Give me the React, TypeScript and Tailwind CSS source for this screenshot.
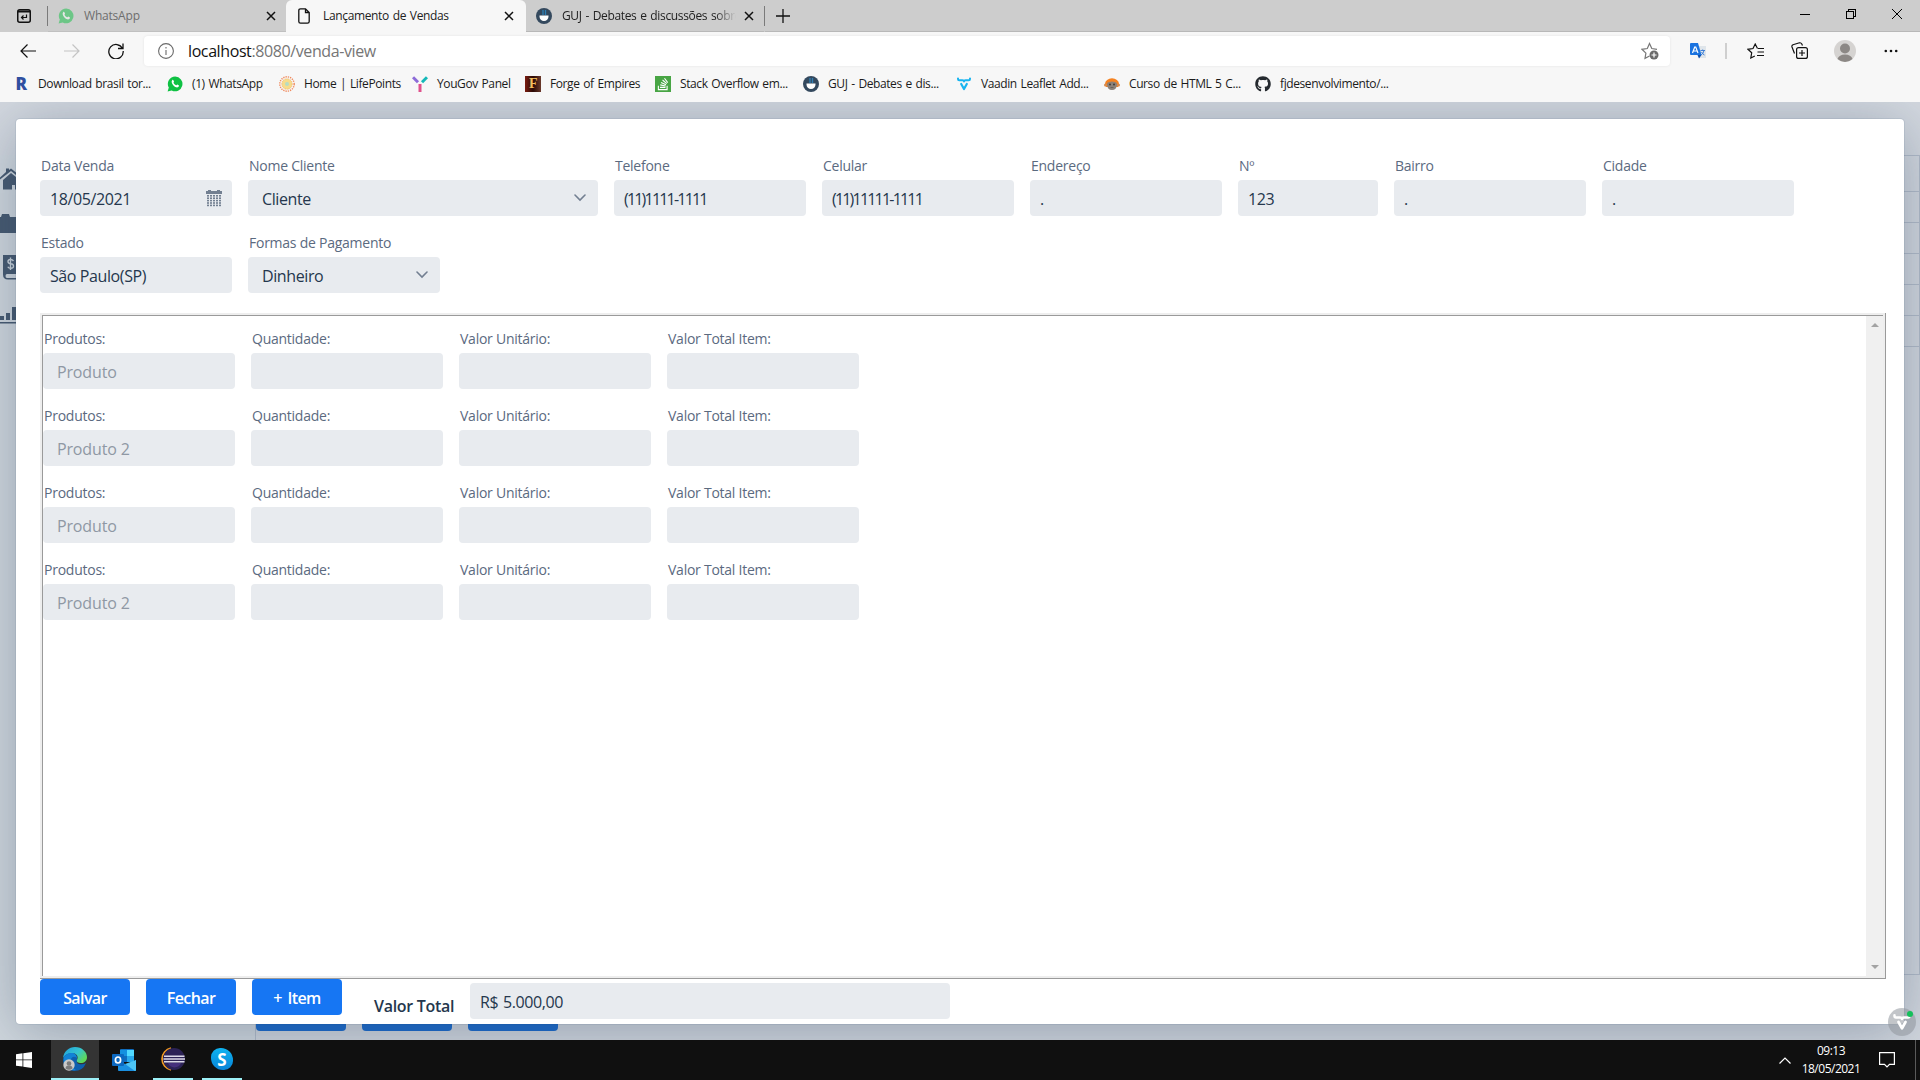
import React from 'react';
import clsx from 'clsx';
import { FaGithub, FaStackOverflow } from 'react-icons/fa';

/* ---------- Icons ---------- */

const WhatsAppIcon = ({ className }: { className?: string }) => (
  <svg viewBox="0 0 16 16" className={clsx('h-4 w-4', className)}>
    <path d="M8.2.5a7.4 7.4 0 0 0-6.4 11.1L.6 15.6l4.1-1.1A7.4 7.4 0 1 0 8.2.5z" fill="#0fc143" />
    <path d="M5.3 4.1c.5-.5 1-.2 1.2.3l.5 1.2c.1.4-.6.9-.5 1.2.5 1.1 1.4 2 2.6 2.5.4.1.8-.9 1.2-.8l1.4.7c.6.3 0 1.6-.5 1.9-1.2.7-3 .1-4.5-1.3C4.900 8.100 3.900 5.500 5.300 4.100z" fill="#fff" />
  </svg>
);

const GujIcon = () => (
  <svg viewBox="0 0 16 16" className="h-4 w-4">
    <circle cx="8" cy="8" r="8" fill="#34495e" />
    <path d="M7 2v5M9.500 2v5" stroke="#2f80b5" strokeWidth="1.300" />
    <path d="M3.500 7.500h9v1a4.500 4.500 0 0 1-9 0z" fill="#fff" />
  </svg>
);

const LifePointsIcon = () => (
  <svg viewBox="0 0 16 16" className="h-4 w-4">
    <circle cx="8" cy="8" r="7.200" fill="none" stroke="#f08a5d" strokeWidth="1.400" strokeDasharray="1.300 1" />
    <circle cx="8" cy="8" r="5.200" fill="#f6dc8b" />
    <circle cx="8" cy="8" r="5.200" fill="none" stroke="#f5b971" strokeWidth="1" strokeDasharray="1 .8" />
    <circle cx="8" cy="8" r="2" fill="#b5dcc5" />
  </svg>
);

const YouGovIcon = () => (
  <svg viewBox="0 0 16 16" className="h-4 w-4" strokeWidth="3">
    <path d="M1 1.200l5 5" stroke="#8c6bd8" />
    <path d="M15 1.200l-5 5" stroke="#14b8b8" />
    <path d="M8 8v8" stroke="#e0518c" />
  </svg>
);

const ForgeIcon = () => (
  <div className="flex h-4 w-4 items-center justify-center bg-linear-to-r from-[#7c1c10] via-[#2a0a06] to-[#6b3a2c] font-['Liberation_Serif',serif] text-[14px] leading-none font-bold text-[#f3bf5f]">
    F
  </div>
);

const StackIcon = () => (
  <div className="flex h-4 w-4 items-center justify-center bg-[#48a544]">
    <FaStackOverflow size={14} className="text-white" />
  </div>
);

const VaadinIcon = ({ className }: { className?: string }) => (
  <svg viewBox="0 0 16 16" className={className} fill="none" strokeWidth="2" strokeLinecap="round" strokeLinejoin="round">
    <path d="M2 2.500v.6q0 1.200 1.200 1.200h3.300Q8 4.300 8 5.500 8 4.300 9.500 4.300h3.300q1.200 0 1.200-1.200v-.6" stroke="currentColor" />
    <path d="M5.200 8L8 13l2.800-5" stroke="currentColor" strokeWidth="2.200" />
  </svg>
);

const MonkeyIcon = () => (
  <svg viewBox="0 0 16 16" className="h-4 w-4">
    <path d="M1 8a7 5.800 0 0 1 14 0l-1 3H2z" fill="#f58220" />
    <circle cx="1.600" cy="9" r="1.600" fill="#d98a4a" />
    <circle cx="14.400" cy="9" r="1.600" fill="#d98a4a" />
    <path d="M3 8.500Q3 6 5.500 6 8 5 10.500 6 13 6 13 8.500 12.500 14 8 14 3.500 14 3 8.500z" fill="#8b8178" />
    <circle cx="6" cy="8.500" r=".9" fill="#3a3430" />
    <circle cx="10" cy="8.500" r=".9" fill="#3a3430" />
    <path d="M6.500 11.500h3" stroke="#6a625b" />
  </svg>
);

const CloseIcon = () => (
  <svg viewBox="0 0 10 10" className="h-2.5 w-2.5" stroke="#111" strokeWidth="1.500">
    <path d="M1 1l8 8M9 1L1 9" />
  </svg>
);

const ChevronDown = () => (
  <svg viewBox="0 0 12 8" className="mr-0.5 h-2 w-3" fill="none" stroke="#727f91" strokeWidth="1.600" strokeLinecap="round">
    <path d="M1 1l5 5 5-5" />
  </svg>
);

const CalendarIcon = () => (
  <svg viewBox="0 0 16 17" className="h-[17px] w-4" fill="#727f91">
    <path d="M0 1h2V0h3v1h6V0h3v1h2v3H0z" />
    {[0, 1, 2, 3, 4].map((row) =>
      [0, 1, 2, 3, 4].map((col) => (
        <rect key={`${row}-${col}`} x={1 + col * 3} y={5 + row * 2.4} width="2" height="1.600" />
      ))
    )}
  </svg>
);

/* ---------- Browser chrome ---------- */

interface Bookmark {
  label: string;
  icon: React.ReactNode;
  width: string;
}

const bookmarks: Bookmark[] = [
  { label: 'Download brasil tor...', width: 'w-[154px]', icon: <span className="flex h-4 w-4 items-center justify-center text-[17px] font-extrabold text-[#2f4fa0]">R</span> },
  { label: '(1) WhatsApp', width: 'w-[112px]', icon: <WhatsAppIcon /> },
  { label: 'Home | LifePoints', width: 'w-[133px]', icon: <LifePointsIcon /> },
  { label: 'YouGov Panel', width: 'w-[113px]', icon: <YouGovIcon /> },
  { label: 'Forge of Empires', width: 'w-[130px]', icon: <ForgeIcon /> },
  { label: 'Stack Overflow em...', width: 'w-[148px]', icon: <StackIcon /> },
  { label: 'GUJ - Debates e dis...', width: 'w-[153px]', icon: <GujIcon /> },
  { label: 'Vaadin Leaflet Add...', width: 'w-[148px]', icon: <VaadinIcon className="h-4 w-4 text-[#17b4f0]" /> },
  { label: 'Curso de HTML 5 C...', width: 'w-[151px]', icon: <MonkeyIcon /> },
  { label: 'fjdesenvolvimento/...', width: 'w-[140px]', icon: <FaGithub size={16} className="text-[#24292e]" /> },
];

const TabBar = () => (
  <div className="flex h-8 bg-[#cdcdcd] text-[12px] tracking-[-0.35px] [word-spacing:1px]">
    <div className="flex w-[47px] items-center justify-center">
      <svg viewBox="0 0 14 14" className="h-3.5 w-3.5">
        <rect x=".75" y=".75" width="12.500" height="12.500" rx="2" fill="none" stroke="#111" strokeWidth="1.500" />
        <path d="M1 2.500h12" stroke="#111" strokeWidth="2" />
        <path d="M9.500 5.500v3h-5M6.500 6.500l-2 2 2 2" fill="none" stroke="#111" strokeWidth="1.200" />
      </svg>
    </div>
    <div className="my-1.5 w-px bg-[#7a7a7a]" />
    <div className="flex w-[238px] items-center border-b border-[#c0c0c0] pr-2.5 pl-2.5">
      <WhatsAppIcon className="opacity-50" />
      <span className="ml-2.5 flex-1 tracking-[-0.2px] text-[#6d6d6d]">WhatsApp</span>
      <CloseIcon />
    </div>
    <div className="flex w-60 items-center rounded-t-md bg-[#f7f7f7] pr-3 pl-3">
      <svg viewBox="0 0 12 16" className="h-4 w-3" fill="none" stroke="#111" strokeWidth="1.300">
        <path d="M7.500.8H2.500Q.8.8.8 2.500v11q0 1.700 1.700 1.700h7q1.700 0 1.700-1.700v-9zV4.500h3.700" />
      </svg>
      <span className="ml-[13px] flex-1 text-[#222]">Lançamento de Vendas</span>
      <CloseIcon />
    </div>
    <div className="flex w-[238px] items-center border-b border-[#b8b8b8] pr-2.5 pl-2.5">
      <GujIcon />
      <span className="ml-2.5 w-[174px] overflow-hidden mask-r-from-88% whitespace-nowrap text-[#222]">
        GUJ - Debates e discussões sobre
      </span>
      <span className="ml-auto"><CloseIcon /></span>
    </div>
    <div className="my-1.5 w-px bg-[#7a7a7a]" />
    <div className="flex flex-1 items-center border-b border-[#b8b8b8] pl-[11px]">
      <svg viewBox="0 0 14 14" className="h-3.5 w-3.5" stroke="#111" strokeWidth="1.300">
        <path d="M7 0v14M0 7h14" />
      </svg>
      <div className="ml-auto flex w-[120px] items-center gap-9">
        <svg viewBox="0 0 10 10" className="h-2.5 w-2.5 -translate-y-0.5" stroke="#000" shapeRendering="crispEdges">
          <path d="M0 5.500h10" />
        </svg>
        <svg viewBox="0 0 10 10" className="h-2.5 w-2.5 -translate-y-0.5" fill="none" stroke="#000" shapeRendering="crispEdges">
          <path d="M.5 2.500h7v7h-7zM2.500 2.500v-2h7v7h-2" />
        </svg>
        <svg viewBox="0 0 10 10" className="h-2.5 w-2.5 -translate-y-0.5" stroke="#000">
          <path d="M0 0l10 10M10 0L0 10" />
        </svg>
      </div>
    </div>
  </div>
);

const AddressBar = () => (
  <div className="flex h-[38px] items-center pb-px">
    <div className="flex w-36 items-center pl-5">
      <svg viewBox="0 0 16 14" className="h-3.5 w-4" fill="none" stroke="#111" strokeWidth="1.200">
        <path d="M16 7H1M7.500.5L1 7l6.500 6.500" />
      </svg>
      <svg viewBox="0 0 16 14" className="ml-7 h-3.5 w-4" fill="none" stroke="#c4c4c4" strokeWidth="1.200">
        <path d="M0 7h15M8.500.5L15 7l-6.500 6.500" />
      </svg>
      <svg viewBox="0 0 16 16" className="ml-7 h-4 w-4" fill="none" stroke="#111" strokeWidth="1.300">
        <path d="M14.500 5.500A7.200 7.200 0 1 0 15.200 8M15 .5v5h-5" />
      </svg>
    </div>
    <div className="flex h-[30px] w-[1526px] items-center rounded bg-white pr-[11px] pl-3.5 shadow-[0_0_3px_rgba(0,0,0,0.08)]">
      <svg viewBox="0 0 16 16" className="h-4 w-4" fill="none" stroke="#6a6a6a" strokeWidth="1.100">
        <circle cx="8" cy="8" r="7.400" />
        <path d="M8 7v5M8 4v1.500" />
      </svg>
      <span className="ml-3.5 flex-1 text-[16px] tracking-[-0.4px] text-[#767676]">
        <span className="text-[#111]">localhost</span>:8080/venda-view
      </span>
      <svg viewBox="0 0 18 18" className="h-[18px] w-[18px]" fill="none" stroke="#777" strokeWidth="1.200">
        <path d="M8.500 14L4 16.300l.9-5.200L1 7.300l5.300-.8L8.500 1.500l2.300 5 5.200.8" />
        <circle cx="13" cy="13" r="4.500" fill="#6b6b6b" stroke="none" />
        <path d="M13 10.500v5M10.500 13h5" stroke="#fff" />
      </svg>
    </div>
    <div className="flex flex-1 items-center pl-5">
      <svg viewBox="0 0 16 16" className="h-4 w-4">
        <path d="M7 3h9v12H9z" fill="#dfe5ea" />
        <path d="M1 0h7l3.500 12H1q-1 0-1-1V1q0-1 1-1z" fill="#1a73e0" />
        <path d="M7.500 12h4L9 15.500z" fill="#0b4fae" />
        <path d="M2.500 10L4.700 4h1L8 10M3.400 8h3.800" fill="none" stroke="#fff" strokeWidth="1.200" />
        <path d="M10.500 7.500h4.500M12.700 6.500v1M14 7.500q-.5 3-3 4.500M11.500 9q1.500 2.500 3 3" fill="none" stroke="#3f80d8" />
      </svg>
      <div className="ml-[19px] h-4 w-0.5 bg-[#cfcfcf]" />
      <svg viewBox="0 0 18 16" className="ml-5 h-4 w-[18px]" fill="none" stroke="#111" strokeWidth="1.200">
        <path d="M10.500 5.500L8.200 1 6 5.500l-5 .8 3.700 3.500-.9 5.200 4-2M11 5.500h6M10.500 9h6.500M10 12.500h7" />
      </svg>
      <svg viewBox="0 0 17 17" className="ml-[26px] h-[17px] w-[17px]" fill="none" stroke="#111" strokeWidth="1.200">
        <rect x="5.600" y="5.600" width="10.800" height="10.800" rx="2" />
        <path d="M11 8v6M8 11h6M3.500 11.500L1 5Q.5 3.500 2 2.800L8.500.8Q10 .5 10.800 2l.7 1.500" />
      </svg>
      <svg viewBox="0 0 22 22" className="ml-[26px] h-[22px] w-[22px]">
        <circle cx="11" cy="11" r="11" fill="#d5d3d1" />
        <circle cx="11" cy="8.500" r="5" fill="#8c8885" />
        <path d="M3.500 19Q5 14.500 11 14.500T18.500 19Q15 22 11 22t-7.500-3z" fill="#8c8885" />
      </svg>
      <svg viewBox="0 0 14 4" className="ml-7 h-1 w-3.5" fill="#111">
        <circle cx="1.800" cy="2" r="1.300" />
        <circle cx="7" cy="2" r="1.300" />
        <circle cx="12.200" cy="2" r="1.300" />
      </svg>
    </div>
  </div>
);

const BrowserChrome = () => (
  <header className="h-[102px] shrink-0 bg-[#f7f7f7]">
    <TabBar />
    <AddressBar />
    <div className="flex h-7 items-center pl-[13px] text-[12px] tracking-[-0.4px] text-[#1b1b1b] [word-spacing:1px]">
      {bookmarks.map((b) => (
        <div key={b.label} className={clsx('flex shrink-0 items-center gap-[9px] whitespace-nowrap', b.width)}>
          <span className="shrink-0">{b.icon}</span>
          {b.label}
        </div>
      ))}
    </div>
  </header>
);

/* ---------- Form ---------- */

interface FieldProps {
  label: string;
  value?: string;
  width?: string;
  kind?: 'text' | 'date' | 'select' | 'phone';
  disabled?: boolean;
}

const Field = ({ label, value, width = 'w-48', kind = 'text', disabled }: FieldProps) => (
  <label className={clsx('flex flex-col', width)}>
    <span className="h-[25px] pt-px pl-px text-[14px] leading-[20px] font-medium tracking-[-0.25px] text-[#5b6a7f]">{label}</span>
    <div
      className={clsx(
        'flex h-9 items-center justify-between rounded bg-[#e8ebef] pr-2.5 text-[16px] font-medium',
        kind === 'select' || disabled ? 'pl-3.5' : 'pl-2.5',
        disabled ? 'tracking-[-0.15px] text-[#8f98a4]' : 'text-[#25374d]',
        !disabled && (kind === 'phone' ? 'tracking-[-1.8px]' : 'tracking-[-0.4px]')
      )}
    >
      <span className="pt-0.5">{value}</span>
      {kind === 'date' && <CalendarIcon />}
      {kind === 'select' && <ChevronDown />}
    </div>
  </label>
);

const Button = ({ children }: { children: React.ReactNode }) => (
  <button type="button" className="h-9 w-[90px] rounded bg-[#1676f3] pt-px text-[16px] font-semibold tracking-[-0.6px] text-white [word-spacing:2px]">
    {children}
  </button>
);

const produtos = ['Produto', 'Produto 2', 'Produto', 'Produto 2'];

const ItemsPanel = () => (
  <div className="w-[1846px] border-r border-b border-[#9a9a9a]">
    <div className="border-2 border-[#eee]">
      <div className="flex h-[661px] border-t border-l border-[#9a9a9a]">
        <div className="flex-1 pt-3">
          {produtos.map((produto, i) => (
            <div key={i} className="flex h-[77px] gap-4">
              <Field label="Produtos:" value={produto} disabled />
              <Field label="Quantidade:" />
              <Field label="Valor Unitário:" />
              <Field label="Valor Total Item:" />
            </div>
          ))}
        </div>
        <div className="flex w-[17px] flex-col items-center justify-between bg-[#f0f0f0] py-[7px]">
          <svg viewBox="0 0 8 4" className="h-1 w-2" fill="#a3a3a3"><path d="M4 0l4 4H0z" /></svg>
          <svg viewBox="0 0 8 4" className="h-1 w-2" fill="#a3a3a3"><path d="M0 0h8L4 4z" /></svg>
        </div>
      </div>
    </div>
  </div>
);

const VendaDialog = () => (
  <div className="absolute inset-x-4 top-[17px] bottom-4 rounded bg-white pt-9 pl-6 shadow-[0_0_0_1px_rgba(25,59,103,0.08),0_8px_60px_0_rgba(35,58,88,0.36)]">
    <div className="flex h-[77px] gap-4">
      <Field label="Data Venda" value="18/05/2021" kind="date" />
      <Field label="Nome Cliente" value="Cliente" kind="select" width="w-[350px]" />
      <Field label="Telefone" value="(11)1111-1111" kind="phone" />
      <Field label="Celular" value="(11)11111-1111" kind="phone" />
      <Field label="Endereço" value="." />
      <Field label="Nº" value="123" width="w-[140px]" />
      <Field label="Bairro" value="." />
      <Field label="Cidade" value="." />
    </div>
    <div className="flex h-[81px] gap-4">
      <Field label="Estado" value="São Paulo(SP)" />
      <Field label="Formas de Pagamento" value="Dinheiro" kind="select" />
    </div>
    <ItemsPanel />
    <div className="flex gap-4">
      <Button>Salvar</Button>
      <Button>Fechar</Button>
      <Button>+ Item</Button>
      <span className="mt-[15px] ml-4 w-20 text-[16px] font-semibold tracking-[-0.3px] whitespace-nowrap text-[#25374d]">Valor Total</span>
      <div className="mt-1 flex h-9 w-[480px] items-center rounded bg-[#e8ebef] pt-0.5 pl-2.5 text-[16px] font-medium tracking-[-0.4px] text-[#25374d] [word-spacing:1px]">
        R$ 5.000,00
      </div>
    </div>
  </div>
);

/* Page that sits dimmed under the modal */
const DimmedPage = () => (
  <div className="flex h-full flex-col bg-[#d3d8df]">
    <div className="h-[53px]" />
    <div className="flex flex-1">
      <div className="w-64 border-r border-[#b3bdca] bg-[#d2d9df]">
        <svg viewBox="0 0 16 180" className="h-[180px] w-4" fill="#475a70">
          <path d="M0 22.500L6 17v-3.500h3V15l2-1.500 5 4v2.500l-5-4L0 24.500z" />
          <path d="M3 25l8-7 5 4v12.500h-1V30h-3v4.500H3z" />
          <path d="M0 62h1l1-3h7l1 3h6v16H0z" />
          <path d="M3 100h13v19H7q-1.500 0-1.500 2T7 123h9v1.500H8q-5 0-5-5z" />
          <path d="M13.500 106q-1-1.500-3-1.500-2.500 0-2.500 2t2.800 2.300 2.700 2.400-2.500 2.100-3.200-1.600M10.500 102.500v12.500" fill="none" stroke="#cdd5dc" strokeWidth="1.400" />
          <path d="M0 161h4v4H0zM6 158h4v7H6zM12 152h4v13h-4zM0 167h16v1.500H0z" />
        </svg>
      </div>
      <div className="flex flex-1 flex-col">
        <div className="h-[820px] border-t border-r border-b border-[#b3bcc9]">
          <div className="h-9 border-b border-[#b3bcc9]" />
          {[0, 1, 2, 3, 4].map((row) => (
            <div key={row} className="h-[31px] border-b border-[#b3bcc9]" />
          ))}
        </div>
        <div className="mt-5 flex gap-4">
          {[0, 1, 2].map((i) => (
            <div key={i} className="h-9 w-[90px] rounded bg-[#1b6bcd]" />
          ))}
        </div>
      </div>
    </div>
  </div>
);

/* ---------- Taskbar ---------- */

const Taskbar = () => (
  <footer className="flex h-10 shrink-0 bg-[#101010] text-white">
    <div className="flex w-[51px] items-center pl-4">
      <svg viewBox="0 0 16 16" className="h-4 w-4" fill="#fff">
        <path d="M0 2.200l6.500-.9v6.200H0zM7.300 1.200L16 0v7.500H7.300zM0 8.300h6.500v6.300L0 13.800zM7.300 8.300H16V16l-8.700-1.200z" />
      </svg>
    </div>
    <div className="flex w-12 items-center justify-center border-b-2 border-[#9df0f7] bg-[#343434]">
      <svg viewBox="0 0 24 24" className="h-6 w-6">
        <defs>
          <linearGradient id="edgeTop" x1="0" y1="0" x2="1" y2=".6">
            <stop offset="0" stopColor="#1f9fe0" />
            <stop offset=".6" stopColor="#35c4cf" />
            <stop offset="1" stopColor="#5fd858" />
          </linearGradient>
        </defs>
        <path d="M0 12Q2 4 9 6q6 1 5 7-1 3 2 4 4 1 7-1-3 8-12 8Q0 23 0 12z" fill="#0d5fae" />
        <path d="M0 11C1 4 6 0 12 0c7 0 12 5 12 10 0 4-3 6-6 6s-5-1-4-3c2-4-1-7-5-7-5 0-8 3-9 5z" fill="url(#edgeTop)" />
        <path d="M8 12q-2 8 5 11-6 1-10-4Q0 15 1 10q3-4 8-4 4 0 5 5-4-3-6 1z" fill="#1283d6" />
        <circle cx="6" cy="18" r="5.700" fill="#c9c9c9" />
        <circle cx="6" cy="16.500" r="2.300" fill="#7b7b7b" />
        <path d="M2.500 21.500q0-3 3.500-3t3.500 3Q6 24 2.500 21.500z" fill="#7b7b7b" />
      </svg>
    </div>
    <div className="flex w-[50px] items-center justify-center">
      <svg viewBox="0 0 24 22" className="h-[22px] w-6">
        <path d="M8 1q0-1 1-1h12q1 0 1 1v12H8z" fill="#0f6cbd" />
        <path d="M8 1h7v6H8z" fill="#1490df" />
        <path d="M15 1h7v6h-7z" fill="#50d9ff" />
        <path d="M15 7h7v6h-7z" fill="#28a8ea" />
        <path d="M6 11l9 5 9-5v10q0 1-1 1H7q-1 0-1-1z" fill="#1a8fe0" />
        <path d="M24 11v10q0 1-1 1L13 15z" fill="#4cc4f5" />
        <rect y="5" width="12" height="12" rx="1" fill="#0c68c0" />
        <ellipse cx="6" cy="11" rx="2.600" ry="3" fill="none" stroke="#fff" strokeWidth="1.700" />
      </svg>
    </div>
    <div className="ml-1 flex w-10 items-center justify-center border-b-2 border-[#9df0f7]">
      <svg viewBox="0 0 24 24" className="h-6 w-6">
        <path d="M10 1.200A11 11 0 0 0 10 22.800" fill="none" stroke="#f29a22" strokeWidth="1.800" />
        <circle cx="13" cy="12" r="11" fill="#2c2255" />
        <path d="M7 16a7 7 0 0 0 13 0z" fill="#46307c" />
        <path d="M3 9.200h20.500M2.500 12h21.500M3 14.800h20.500" stroke="#dcd9e8" strokeWidth="1.500" />
      </svg>
    </div>
    <div className="ml-[9px] flex w-10 items-center justify-center border-b-2 border-[#9df0f7]">
      <div className="flex h-[22px] w-[22px] items-center justify-center rounded-tl-[9px] rounded-tr-xl rounded-br-[9px] rounded-bl-xl bg-linear-to-b from-[#0fb3f0] to-[#0a84d8] text-[17px] leading-none font-bold">
        S
      </div>
    </div>
    <div className="ml-auto flex items-center">
      <svg viewBox="0 0 12 7" className="h-[7px] w-3" fill="none" stroke="#fff" strokeWidth="1.200">
        <path d="M.5 6.500L6 1l5.500 5.500" />
      </svg>
      <div className="ml-2.5 w-[60px] text-center text-[12px] leading-[18px] tracking-[-0.5px] whitespace-nowrap">
        <div>09:13</div>
        <div>18/05/2021</div>
      </div>
      <svg viewBox="0 0 16 16" className="ml-[18px] h-4 w-4" fill="none" stroke="#fff" strokeWidth="1.200">
        <path d="M.6.6h14.800v11.800h-4.900L8 15l-2.500-2.600H.6z" />
      </svg>
      <div className="ml-5 h-10 w-[5px] border-l border-[#5a5a5a]" />
    </div>
  </footer>
);

export default function App() {
  return (
    <div className="flex h-[1080px] w-[1920px] flex-col overflow-hidden font-['Open_Sans','Noto_Sans',sans-serif]">
      <BrowserChrome />
      <main className="relative h-[938px] overflow-hidden">
        <DimmedPage />
        <VendaDialog />
        <div className="absolute right-1 bottom-1 flex h-7 w-7 items-center justify-center rounded-full bg-[#8f959c]/55">
          <VaadinIcon className="h-5 w-5 text-white" />
          <span className="absolute top-[3px] right-[3px] h-1.5 w-1.5 rounded-full bg-[#14c05a]" />
        </div>
      </main>
      <Taskbar />
    </div>
  );
}
